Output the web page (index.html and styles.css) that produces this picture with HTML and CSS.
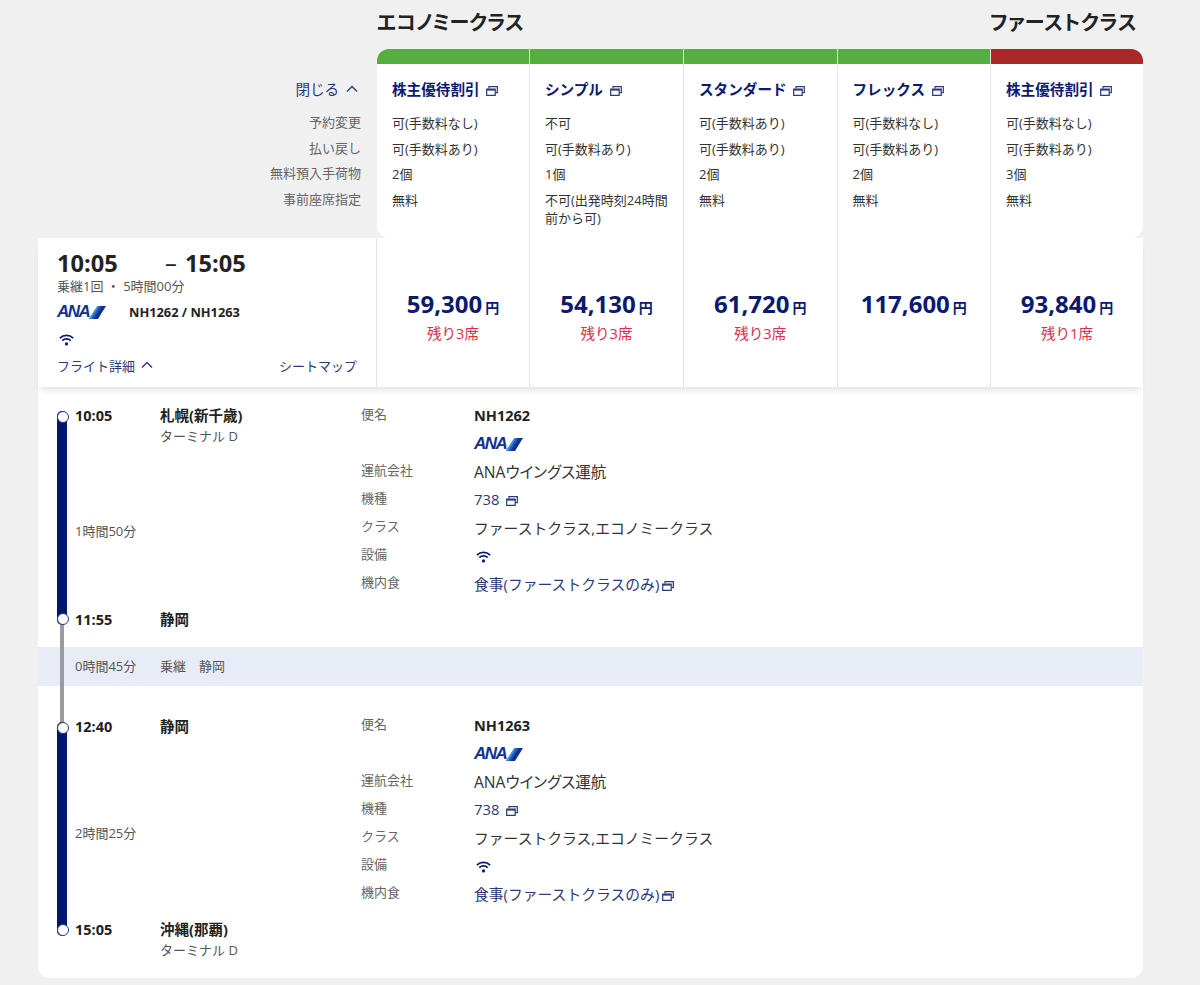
FILE: index.html
```html
<!DOCTYPE html>
<html lang="ja">
<head>
    <meta charset="UTF-8">
    <meta name="viewport" content="width=device-width, initial-scale=1.0">
    <title>フライト詳細</title>
    <link rel="stylesheet" href="styles.css">
</head>
<body>
    <svg class="sprites" aria-hidden="true">
        <symbol id="copy" viewBox="0 0 12 10">
            <path d="M3 2.500V.7h8.300v6H9.200" fill="none" stroke="currentColor" stroke-width="1.2"/>
            <path d="M.7 3h8.500v6.300H.7z" fill="none" stroke="currentColor" stroke-width="1.2"/>
            <path d="M.7 3h8.500v1.600H.7z" fill="currentColor"/>
        </symbol>
        <symbol id="wifi" viewBox="0 0 14 11">
            <path d="M.8 3.700a8.800 8.800 0 0 1 12.400 0M3.100 6.100a5.500 5.500 0 0 1 7.800 0" fill="none" stroke="currentColor" stroke-width="1.600"/>
            <circle cx="7" cy="9.200" r="1.500" fill="currentColor"/>
        </symbol>
        <symbol id="chevron" viewBox="0 0 12 8">
            <path d="M1 6.500 6 1.500l5 5" fill="none" stroke="currentColor" stroke-width="1.400"/>
        </symbol>
        <symbol id="wing" viewBox="0 0 17 13">
            <path d="M8.500 0H17L9 13H0z" fill="#12318f"/>
            <path d="M8.500 0h2L2.500 13H0z" fill="#3f8ee0"/>
            <path d="M10.500 0h2L4.500 13h-2z" fill="#1f5cc0"/>
        </symbol>
    </svg>

    <div class="page">
        <div class="class-titles">
            <h2 class="class-economy">エコノミークラス</h2>
            <h2 class="class-first">ファーストクラス</h2>
        </div>

        <div class="fare-table">
            <div class="fare-labels">
                <a class="toggle">閉じる <svg class="chevron"><use href="#chevron"/></svg></a>
                <ul class="rows">
                    <li>予約変更</li>
                    <li>払い戻し</li>
                    <li>無料預入手荷物</li>
                    <li>事前座席指定</li>
                </ul>
            </div>

            <div class="fare">
                <div class="band green first-band"></div>
                <div class="fare-body">
                    <div class="fare-name">株主優待割引 <svg class="copy"><use href="#copy"/></svg></div>
                    <ul class="rows">
                        <li>可(手数料なし)</li>
                        <li>可(手数料あり)</li>
                        <li>2個</li>
                        <li>無料</li>
                    </ul>
                </div>
            </div>
            <div class="fare">
                <div class="band green"></div>
                <div class="fare-body">
                    <div class="fare-name">シンプル <svg class="copy"><use href="#copy"/></svg></div>
                    <ul class="rows">
                        <li>不可</li>
                        <li>可(手数料あり)</li>
                        <li>1個</li>
                        <li>不可(出発時刻24時間前から可)</li>
                    </ul>
                </div>
            </div>
            <div class="fare">
                <div class="band green"></div>
                <div class="fare-body">
                    <div class="fare-name">スタンダード <svg class="copy"><use href="#copy"/></svg></div>
                    <ul class="rows">
                        <li>可(手数料あり)</li>
                        <li>可(手数料あり)</li>
                        <li>2個</li>
                        <li>無料</li>
                    </ul>
                </div>
            </div>
            <div class="fare">
                <div class="band green"></div>
                <div class="fare-body">
                    <div class="fare-name">フレックス <svg class="copy"><use href="#copy"/></svg></div>
                    <ul class="rows">
                        <li>可(手数料なし)</li>
                        <li>可(手数料あり)</li>
                        <li>2個</li>
                        <li>無料</li>
                    </ul>
                </div>
            </div>
            <div class="fare">
                <div class="band red last-band"></div>
                <div class="fare-body">
                    <div class="fare-name">株主優待割引 <svg class="copy"><use href="#copy"/></svg></div>
                    <ul class="rows">
                        <li>可(手数料なし)</li>
                        <li>可(手数料あり)</li>
                        <li>3個</li>
                        <li>無料</li>
                    </ul>
                </div>
            </div>
        </div>

        <div class="flight-row">
            <div class="summary">
                <div class="times"><span class="dep">10:05</span><span class="dash">–</span><span>15:05</span></div>
                <div class="stops">乗継1回 ・ 5時間00分</div>
                <div class="flight-nos">
                    <span class="ana"><i>ANA</i><svg class="wing"><use href="#wing"/></svg></span>
                    <b>NH1262 / NH1263</b>
                </div>
                <svg class="wifi"><use href="#wifi"/></svg>
                <div class="summary-links">
                    <a>フライト詳細 <svg class="chevron"><use href="#chevron"/></svg></a>
                    <a>シートマップ</a>
                </div>
            </div>
            <div class="price"><div class="amount">59,300<small>円</small></div><div class="seats">残り3席</div></div>
            <div class="price"><div class="amount">54,130<small>円</small></div><div class="seats">残り3席</div></div>
            <div class="price"><div class="amount">61,720<small>円</small></div><div class="seats">残り3席</div></div>
            <div class="price"><div class="amount">117,600<small>円</small></div></div>
            <div class="price"><div class="amount">93,840<small>円</small></div><div class="seats">残り1席</div></div>
        </div>

        <div class="details">
            <section class="leg leg-first">
                <div class="track"></div>
                <div class="route">
                    <div class="stop">
                        <div class="stop-line"><b class="stop-time">10:05</b><b>札幌(新千歳)</b></div>
                        <div class="terminal">ターミナル D</div>
                    </div>
                    <div class="duration">1時間50分</div>
                    <div class="stop">
                        <div class="stop-line"><b class="stop-time">11:55</b><b>静岡</b></div>
                    </div>
                </div>
                <dl class="info">
                    <dt>便名</dt><dd><b>NH1262</b></dd>
                    <dt></dt><dd><span class="ana"><i>ANA</i><svg class="wing"><use href="#wing"/></svg></span></dd>
                    <dt>運航会社</dt><dd class="operator">ANAウイングス運航</dd>
                    <dt>機種</dt><dd class="link">738 <svg class="copy"><use href="#copy"/></svg></dd>
                    <dt>クラス</dt><dd>ファーストクラス,エコノミークラス</dd>
                    <dt>設備</dt><dd class="link"><svg class="wifi"><use href="#wifi"/></svg></dd>
                    <dt>機内食</dt><dd class="link">食事(ファーストクラスのみ)<svg class="copy"><use href="#copy"/></svg></dd>
                </dl>
            </section>

            <div class="transfer">
                <div class="connector"></div>
                <span class="transfer-time">0時間45分</span>
                <span>乗継　静岡</span>
            </div>

            <section class="leg leg-last">
                <div class="track"></div>
                <div class="route">
                    <div class="stop">
                        <div class="stop-line"><b class="stop-time">12:40</b><b>静岡</b></div>
                    </div>
                    <div class="duration">2時間25分</div>
                    <div class="stop">
                        <div class="stop-line"><b class="stop-time">15:05</b><b>沖縄(那覇)</b></div>
                        <div class="terminal">ターミナル D</div>
                    </div>
                </div>
                <dl class="info">
                    <dt>便名</dt><dd><b>NH1263</b></dd>
                    <dt></dt><dd><span class="ana"><i>ANA</i><svg class="wing"><use href="#wing"/></svg></span></dd>
                    <dt>運航会社</dt><dd class="operator">ANAウイングス運航</dd>
                    <dt>機種</dt><dd class="link">738 <svg class="copy"><use href="#copy"/></svg></dd>
                    <dt>クラス</dt><dd>ファーストクラス,エコノミークラス</dd>
                    <dt>設備</dt><dd class="link"><svg class="wifi"><use href="#wifi"/></svg></dd>
                    <dt>機内食</dt><dd class="link">食事(ファーストクラスのみ)<svg class="copy"><use href="#copy"/></svg></dd>
                </dl>
            </section>
        </div>
    </div>
</body>
</html>
```

FILE: styles.css
```css
* {
    margin: 0;
    padding: 0;
    box-sizing: border-box;
}

body {
    background: #f0f0f0;
    color: #333;
    font-family: "Open Sans", "Noto Sans CJK JP", sans-serif;
    font-size: 13px;
}

ul {
    list-style: none;
}

.sprites {
    display: none;
}

.page {
    width: 1105px;
    margin-left: 38px;
}

/* class headings */
.class-titles {
    display: grid;
    grid-template-columns: 339px 613px 153px;
    height: 49px;
    padding-top: 9px;
}

.class-titles h2 {
    font-size: 20px;
    line-height: 28px;
    color: #222;
    font-weight: 700;
    white-space: nowrap;
    font-feature-settings: "palt";
}

.class-economy {
    grid-column: 2;
}

.class-first {
    grid-column: 3;
    letter-spacing: 0.6px;
}

/* fare table */
.fare-table {
    display: grid;
    grid-template-columns: 339px 153px 154px 153.5px 153.5px 1fr;
    height: 189px;
}

.fare-labels {
    padding: 15px 16px 0 0;
    text-align: right;
    color: #666;
}

.toggle {
    display: block;
    height: 49px;
    padding: 15px 3px 0 0;
    line-height: 20px;
    font-size: 14.6px;
    color: #2c3a78;
}

.chevron {
    width: 12px;
    height: 8px;
    margin-left: 3px;
    vertical-align: 2px;
}

.rows li {
    min-height: 25.67px;
    line-height: 18px;
}

.band {
    height: 15px;
}

.green {
    background: #55ae3f;
}

.red {
    background: #a92828;
}

.first-band {
    border-top-left-radius: 12px;
}

.last-band {
    border-top-right-radius: 12px;
}

.fare {
    display: flex;
    flex-direction: column;
    border-right: 1px solid #e4e4e4;
}

.fare:last-child {
    border-right: 0;
}

.fare:nth-child(2) .fare-body {
    border-bottom-left-radius: 12px;
}

.fare:last-child .fare-body {
    border-bottom-right-radius: 12px;
}

.fare-body {
    flex: 1;
    background: #fff;
    padding: 15px 14px 0 15px;
    color: #333;
}

.fare-name {
    height: 35px;
    line-height: 20px;
    font-size: 14.6px;
    font-weight: 700;
    color: #0b1a6e;
    white-space: nowrap;
}

.copy {
    width: 12px;
    height: 10px;
    margin-left: 3px;
    color: #2c3a78;
    vertical-align: -1px;
}

/* flight row */
.flight-row {
    position: relative;
    display: grid;
    grid-template-columns: 339px 153px 154px 153.5px 153.5px 1fr;
    height: 149px;
    background: #fff;
    box-shadow: 0 6px 7px -3px rgba(0, 0, 0, 0.12);
}

.summary {
    padding: 11px 19px 0 19px;
    border-right: 1px solid #e4e4e4;
}

.times {
    font-size: 23.6px;
    font-weight: 700;
    line-height: 28px;
    color: #222;
    display: flex;
}

.dep {
    width: 108px;
}

.dash {
    width: 20px;
    font-weight: 400;
}

.stops {
    line-height: 18px;
    color: #555;
}

.flight-nos {
    display: flex;
    align-items: center;
    gap: 23px;
    height: 20px;
    margin-top: 7px;
    font-size: 12.8px;
    color: #222;
}

.ana {
    display: inline-flex;
    align-items: center;
    width: 49px;
    height: 14px;
    color: #12318f;
}

.ana i {
    font-family: "Liberation Sans", sans-serif;
    font-size: 17px;
    font-weight: 700;
    letter-spacing: -1.5px;
    line-height: 14px;
}

.wing {
    width: 17px;
    height: 13px;
    flex: none;
}

.wifi {
    display: block;
    width: 15px;
    height: 12px;
    margin: 12px 0 0 2px;
    color: #0b1a6e;
}

.summary-links {
    display: flex;
    justify-content: space-between;
    margin-top: 10px;
    line-height: 20px;
    color: #2c3a78;
}

.price {
    border-right: 1px solid #e4e4e4;
    text-align: center;
    padding-top: 51px;
}

.price:last-child {
    border-right: 0;
}

.amount {
    font-size: 24px;
    font-weight: 700;
    line-height: 30px;
    color: #0b1a6e;
}

.amount small {
    font-size: 14px;
    margin-left: 3px;
}

.seats {
    font-size: 14.6px;
    line-height: 20px;
    color: #d9304a;
}

/* flight details */
.details {
    background: #fff;
    border-radius: 0 0 12px 12px;
    height: 591px;
}

.leg {
    position: relative;
    display: flex;
    padding-left: 37px;
}

.leg-first {
    height: 260px;
    padding-top: 19px;
}

.leg-last {
    height: 292px;
    padding-top: 31px;
}

.track {
    position: absolute;
    left: 19px;
    width: 10px;
    height: 214px;
    border-radius: 5px;
    background: #00186a;
}

.leg-first .track {
    top: 24px;
}

.leg-last .track {
    top: 36px;
}

.track::before,
.track::after {
    content: "";
    position: absolute;
    left: 0;
    width: 10px;
    height: 10px;
    border-radius: 50%;
    background: #fff;
    border: 1.5px solid #26398c;
}

.track::before {
    top: 0;
}

.track::after {
    bottom: 0;
}

.route {
    display: flex;
    flex-direction: column;
    width: 286px;
    height: 244px;
}

.leg-first .route {
    height: 224px;
}

.stop-line {
    display: flex;
    font-size: 14.5px;
    line-height: 20px;
    color: #222;
}

.stop-time {
    width: 85px;
}

.terminal {
    margin-left: 85px;
    line-height: 21px;
    color: #555;
}

.duration {
    flex: 1;
    display: flex;
    align-items: center;
    padding-top: 3px;
    color: #555;
}

.leg-last .duration {
    padding-top: 7px;
}

.info {
    display: grid;
    grid-template-columns: 113px 1fr;
    grid-auto-rows: 28px;
    align-items: center;
}

.leg-first .info {
    margin-top: -5px;
}

.leg-last .info {
    margin-top: -6px;
}

.info dt {
    color: #666;
    margin-top: -4px;
}

.info dd {
    font-size: 14.8px;
    color: #333;
}

.info dd b {
    font-size: 14.5px;
    color: #222;
}

.info dd.operator {
    font-size: 15.6px;
    font-feature-settings: "palt";
}

.info dd.link {
    color: #2c3a78;
}

.info .wifi {
    margin-top: 3px;
}

.transfer {
    position: relative;
    display: flex;
    align-items: center;
    height: 39px;
    padding: 0 0 2px 37px;
    background: #e8ecf7;
    color: #555;
}

.transfer-time {
    width: 85px;
}

.connector {
    position: absolute;
    left: 22px;
    top: -22px;
    width: 4px;
    height: 97px;
    background: #9a9a9f;
}
```
